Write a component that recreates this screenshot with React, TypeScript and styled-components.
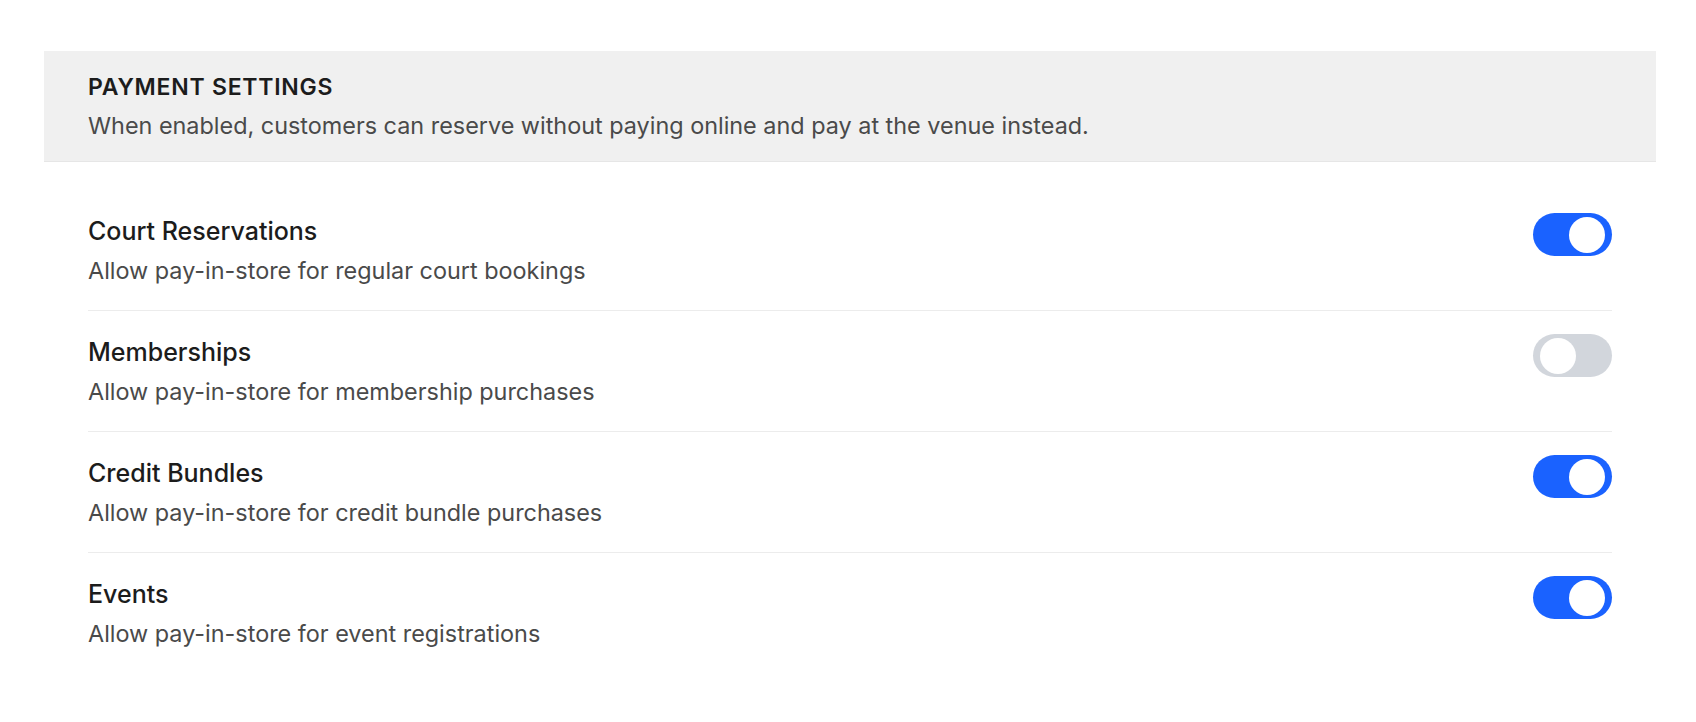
import React, { useState } from "react";
import styled, { createGlobalStyle } from "styled-components";

const GlobalStyle = createGlobalStyle`
  body {
    margin: 0;
    background: #ffffff;
    font-family: Inter, "Noto Sans", sans-serif;
    -webkit-font-smoothing: antialiased;
  }
`;

type Option = {
  id: string;
  title: string;
  description: string;
  enabled: boolean;
};

const initialOptions: Option[] = [
  {
    id: "court",
    title: "Court Reservations",
    description: "Allow pay-in-store for regular court bookings",
    enabled: true,
  },
  {
    id: "memberships",
    title: "Memberships",
    description: "Allow pay-in-store for membership purchases",
    enabled: false,
  },
  {
    id: "bundles",
    title: "Credit Bundles",
    description: "Allow pay-in-store for credit bundle purchases",
    enabled: true,
  },
  {
    id: "events",
    title: "Events",
    description: "Allow pay-in-store for event registrations",
    enabled: true,
  },
];

const App = () => {
  const [options, setOptions] = useState(initialOptions);

  const toggle = (id: string) => {
    setOptions((prev) =>
      prev.map((o) => (o.id === id ? { ...o, enabled: !o.enabled } : o))
    );
  };

  return (
    <Page>
      <GlobalStyle />
      <Section>
        <SectionHeader>
          <SectionTitle>Payment Settings</SectionTitle>
          <SectionText>
            When enabled, customers can reserve without paying online and pay
            at the venue instead.
          </SectionText>
        </SectionHeader>
        <List>
          {options.map((o) => (
            <Row key={o.id}>
              <RowText>
                <RowTitle>{o.title}</RowTitle>
                <RowDescription>{o.description}</RowDescription>
              </RowText>
              <Switch
                type="button"
                role="switch"
                aria-checked={o.enabled}
                $on={o.enabled}
                onClick={() => toggle(o.id)}
              >
                <Knob $on={o.enabled} />
              </Switch>
            </Row>
          ))}
        </List>
      </Section>
    </Page>
  );
};

const Page = styled.main`
  padding: 51px 40px 40px 44px;
`;

const Section = styled.section`
  display: flex;
  flex-direction: column;
`;

const SectionHeader = styled.header`
  display: flex;
  flex-direction: column;
  gap: 7px;
  padding: 19.5px 44px;
  background: #f0f0f0;
  border-bottom: 1px solid #e6e6e6;
`;

const SectionTitle = styled.h2`
  margin: 0;
  font-size: 23px;
  line-height: 32px;
  font-weight: 600;
  letter-spacing: 0.75px;
  text-transform: uppercase;
  color: #1c1c1c;
`;

const SectionText = styled.p`
  margin: 0;
  font-size: 23.4px;
  line-height: 32px;
  color: #4a4a4a;
`;

const List = styled.div`
  display: flex;
  flex-direction: column;
  padding: 28px 44px 0;
`;

const Row = styled.div`
  display: flex;
  align-items: flex-start;
  justify-content: space-between;
  padding: 25px 0 23px;
  border-bottom: 1px solid #ececec;

  &:last-child {
    border-bottom: none;
  }
`;

const RowText = styled.div`
  display: flex;
  flex-direction: column;
  gap: 8px;
`;

const RowTitle = styled.div`
  font-size: 25px;
  line-height: 32px;
  font-weight: 500;
  color: #1c1c1c;
`;

const RowDescription = styled.div`
  font-size: 23.4px;
  line-height: 32px;
  color: #4a4a4a;
`;

const Switch = styled.button<{ $on: boolean }>`
  position: relative;
  flex-shrink: 0;
  width: 79px;
  height: 43px;
  margin-top: -2px;
  padding: 0;
  border: none;
  border-radius: 999px;
  background: ${(p) => (p.$on ? "#1a62ff" : "#d2d6dc")};
  cursor: pointer;
`;

const Knob = styled.span<{ $on: boolean }>`
  position: absolute;
  top: 50%;
  left: ${(p) => (p.$on ? "36px" : "7px")};
  width: 36px;
  height: 36px;
  border-radius: 50%;
  background: #ffffff;
  transform: translateY(-50%);
  transition: left 0.15s ease;
`;

export default App;
